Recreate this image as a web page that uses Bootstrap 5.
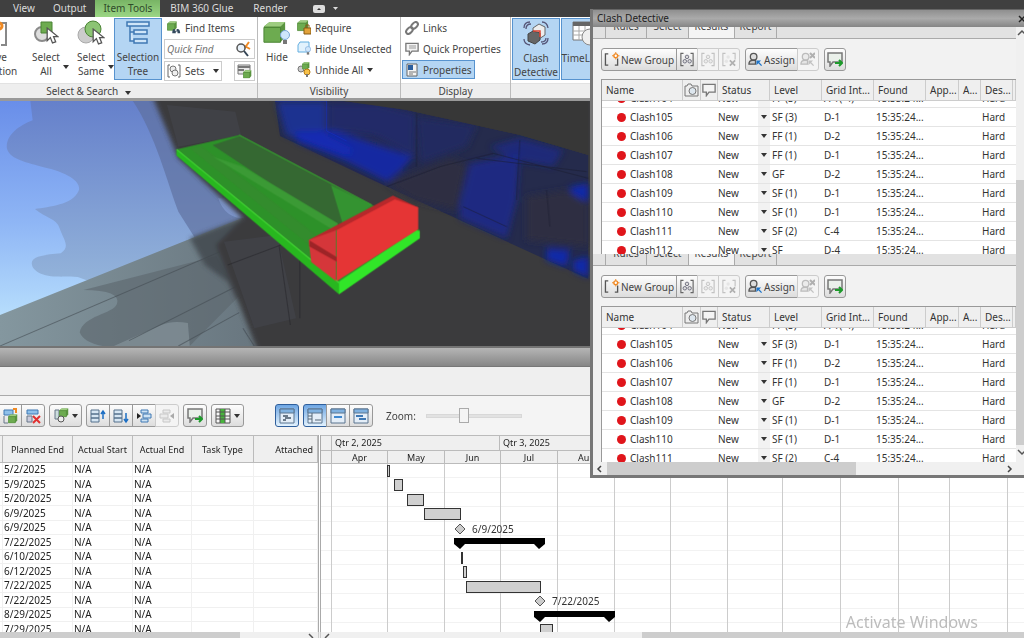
<!DOCTYPE html>
<html lang="en">
<head>
<meta charset="utf-8">
<meta name="viewport" content="width=device-width, initial-scale=1">
<title>Clash Detective and TimeLiner</title>
<link href="https://cdn.jsdelivr.net/npm/bootstrap@5.3.0/dist/css/bootstrap.min.css" rel="stylesheet">
<style>
body{font-family:"Noto Sans","Open Sans",sans-serif;font-size:10px;line-height:14px;color:#444;background:#f0f0f0;height:100vh}
svg{display:block;flex:none}
button,input{font:inherit;color:inherit}
.btn{--bs-btn-font-size:10px;--bs-btn-line-height:14px;--bs-btn-padding-x:0;--bs-btn-padding-y:0;--bs-btn-color:#444;--bs-btn-border-radius:0;--bs-btn-hover-color:#111;white-space:nowrap}
.menubar{background:#404040;height:17px;padding-left:4px}
.menubar .nav-link{color:#dcdcdc;padding:0 9px;line-height:17px}
.menubar .nav-link.active{background:#8fcb78;color:#2f4a2a;background-image:linear-gradient(#78b465,#9bd684);padding:0 8px}
.menubar .nav-link.active ~ .nav-link{padding:0 10px}
.ribbon{background:#fff;border-bottom:3px solid #999;height:84px}
.panel{display:flex;flex-direction:column;border-right:1px solid #bbb}
.panel-body{flex:1;display:flex;padding:1px 2px;align-items:flex-start}
.panel-foot{background:#eee;height:15px;text-align:center;line-height:15px;border-top:1px solid #e2e2e2}
.first-panel{width:258px;overflow:hidden}
.first-panel .panel-foot{padding-right:80px}
.visibility-panel{width:143px}
.display-panel{width:110px}
.tools-panel{flex:1;border:0;overflow:hidden}
.display-panel .panel-body,.tools-panel .panel-body{padding:1px;gap:1px}
.big{display:flex;flex:none;flex-direction:column;align-items:center;gap:4px;width:48px;height:62px;padding-top:1px;border:1px solid transparent}
.big.narrow{width:44px}
.big.on,.tool.on{background:#b4d5f3;border-color:#5793cf}
.tool{display:flex;align-items:center;gap:4px;height:19px;border:1px solid transparent;padding:0 2px}
.caret{width:0;height:0;border:3px solid transparent;border-top:4px solid #333;border-bottom:0;display:inline-block;flex:none}
.big-caret{margin:47px 0 0 -5px}
.stack{display:flex;flex-direction:column;gap:2px}
.find-stack{width:91px;margin-left:2px;flex:none}
.boxed{border:1px solid #ccc;background:#fff;height:20px}
.search-box input{border:0;outline:0;background:none;padding:0 2px;width:70px;font-style:italic;min-width:0}
.hide-btn{width:34px}
.scene{height:245px;background:#3a3a3b}
.dockbar{height:21px;background:linear-gradient(#b5b5b5,#868686);border-top:2px solid #747474;border-bottom:1px solid #777}
.dockgap{height:29px;border-bottom:1px solid #aaa;background:#efefef}
.strip{height:39px;background:#f4f4f4;gap:4px}
.ib{height:23px;border:1px solid #999;background:linear-gradient(#fdfdfd,#ddd);display:flex;align-items:center;justify-content:center;min-width:24px;gap:3px;padding:0 3px;border-radius:3px}
.btn-group>.ib{flex:none}
.strip .btn-group:first-child{margin-left:-2px}
.ib:disabled{opacity:1;border-color:#ccc;background:#f4f4f4}
.ib:disabled svg{opacity:.35;filter:grayscale(1)}
.ib.on{border-color:#2f5f9c;background:linear-gradient(#6ea6e3,#e3f2fd)}
.view-start{margin-left:27px}
.zoom-label{margin-left:9px;font-size:10px}
.zoomer{appearance:none;width:96px;height:16px;margin-left:6px;background:transparent}
.zoomer::-webkit-slider-runnable-track{height:4px;background:#e2e2e2;border:1px solid #d8d8d8}
.zoomer::-webkit-slider-thumb{appearance:none;width:10px;height:15px;margin-top:-7px;background:#f4f4f4;border:1px solid #aaa}
.tasks{width:319px;border-right:1px solid #aaa}
.tasks table,.clashes{table-layout:fixed;width:100%;border-collapse:separate;border-spacing:0}
.tasks th{height:28px;background:#efefef;font-size:9px;font-weight:400;border:solid #bbb;border-width:1px 1px 1px 0;text-align:center;padding:2px 0 0;color:#222;white-space:nowrap}
.tasks td{height:14px;line-height:13px;padding:0 1px;border:solid #f0f0f0;border-width:0 1px 1px 0;color:#222;white-space:nowrap}
.tasks tbody tr:nth-child(even) td{height:15px}
.schedule{border-left:1px solid #aaa;margin-left:1px}
.quarters,.months{display:flex;height:14px;background:#efefef;color:#222;border-top:1px solid #bbb;font-size:9px;line-height:13px}
.quarters{height:15px;line-height:14px}
.months{border-bottom:1px solid #bbb}
.quarters div,.months div{flex:none;border-right:1px solid #bbb}
.quarters div{padding-left:3px}
.months div{text-align:center}
.quarters .lead-in,.months .lead-in{width:11px}
.m56{width:56px}.m57{width:57px}.m58{width:58px}.q2{width:168px}.q3{width:172px}
.chart{width:100%;height:174px}
.chart text{font-size:10px;fill:#333}
.hbar{height:6px;background:#f0f0f0;overflow:hidden;border-color:#ccc}
.hthumb{background:#cdcdcd}
.task-thumb{width:240px}
.gantt-thumb{width:382px}
.dialog-win{top:9px;left:590px;right:0;background:#f2f2f2;border:solid #777;border-width:0 0 3px 3px;z-index:3;overflow:hidden;color:#333}
.dialog-title{height:18px;background:linear-gradient(#8f8f8f,#aaa 50%,#858585);border-top:1px solid #666;padding-left:4px;line-height:17px;color:#222}
.pane{height:227px;overflow:hidden}
.pane.lower{height:208px}
.tabline{height:12px;display:flex;align-items:flex-end;overflow:hidden;background:#e2e2e2;border-bottom:1px solid #aaa;padding-left:12px}
.tabline a{flex:none;color:#444;text-decoration:none;text-align:center;border-right:1px solid #aaa;padding-bottom:5px;line-height:14px;width:42px}
.tabline a.first{border-left:1px solid #aaa}
.tabline a.on{background:#f4f4f4;width:46px}
.tools{padding:9px 8px 8px}
.tools .ib{gap:1px;padding:0 2px}
.tools .btn-group{margin-right:5px}
.tools .grp{min-width:22px;padding:0}
.grid-box{margin-left:8px;border:solid #999;border-width:1px 0 0 1px;background:#fff}
.clashes th{height:21px;background:#efefef;font-weight:400;border:solid #ccc;border-width:0 1px 1px 0;padding:0 0 0 4px;white-space:nowrap;overflow:hidden}
.clashes th.ic{padding:0 0 0 1px}
.clashes td{height:19px;border-bottom:1px solid #e4e4e4;padding:0 0 0 2px;white-space:nowrap;overflow:hidden}
.clip{overflow:hidden}
.clip .clashes{margin-top:-12px}
.dot{width:9px;height:9px;border-radius:50%;background:#e0151b;margin:0 4px 0 13px}
.pick{width:12px;height:18px;border:0;background:#f2f2f2;padding:0;display:flex;align-items:center;justify-content:center}
.vbar{width:8px;background:#f0f0f0}
.vthumb{background:#cdcdcd;margin-top:142px;height:265px}
.hscroll{height:13px;background:#f0f0f0}
.hscroll .hthumb{width:249px;height:13px}
.watermark{right:46px;bottom:5px;font-size:16px;line-height:22px;color:#bcbcbc;z-index:2}
</style>
</head>
<body class="d-flex flex-column overflow-hidden">
<svg width="0" height="0" class="position-absolute" aria-hidden="true">
<defs>
<linearGradient id="sky" x1="0" y1="0" x2="0" y2="1"><stop offset="0" stop-color="#698ee9"/><stop offset=".5" stop-color="#8fb6f5"/><stop offset=".9" stop-color="#b9e0fd"/></linearGradient>
<linearGradient id="haze" x1="0" y1="0" x2="0" y2="1"><stop offset="0" stop-color="#6580cb"/><stop offset=".75" stop-color="#94b4da"/></linearGradient>
<linearGradient id="ground" x1="0" y1="0" x2="1" y2="0"><stop offset="0" stop-color="#84979f"/><stop offset="1" stop-color="#65727b"/></linearGradient>
<filter id="soft"><feGaussianBlur stdDeviation="7"/></filter>
<filter id="softer"><feGaussianBlur stdDeviation="9"/></filter>
<symbol id="cube" viewBox="0 0 26 26"><path d="M1 6 7 1h17v16l-5 6H1z" fill="#5a9440"/><path d="M1 6 7 1h17l-5 5z" fill="#9dcc80"/><path d="M1 7h18v16H1z" fill="#6dab50" stroke="#4a8334"/></symbol>
<symbol id="bulb" viewBox="0 0 10 16"><circle cx="5" cy="5" r="4.500" fill="#cfe6fb" stroke="#7ba7d6"/><path d="M3 10h4v4H3z" fill="#777"/></symbol>
<symbol id="cursor" viewBox="0 0 12 16"><path d="M1 1v12l3-3 2 5 3-1-2-5h4z" fill="#fff" stroke="#555" stroke-width="1.200"/></symbol>
<symbol id="note" viewBox="0 0 16 15"><path d="M1 1h14v9H8l-3 4v-4H1z" fill="#f4f4f4" stroke="#777" stroke-width="1.500"/></symbol>
<symbol id="noteadd" viewBox="0 0 16 15"><path d="M1 1h14v9H6l-3 4v-4H1z" fill="#eaf0ea" stroke="#777" stroke-width="1.500"/><path d="M8 11h7M12 8l3 3-3 3" stroke="#1d9a2b" stroke-width="2" fill="none"/></symbol>
<symbol id="camera" viewBox="0 0 15 14"><path d="M1 3h2l1-2h3l1 2h6v10H1z" fill="#eee" stroke="#777"/><circle cx="8.500" cy="8" r="3.500" fill="#dde6ee" stroke="#777"/></symbol>
<symbol id="group" viewBox="0 0 16 16"><path d="M4 1H1v14h3M12 1h3v14h-3" fill="none" stroke="#666" stroke-width="1.300"/><g fill="#ddd" stroke="#667"><circle cx="8" cy="5" r="2"/><circle cx="5.500" cy="10" r="2"/><circle cx="11" cy="10" r="2"/></g></symbol>
<symbol id="groupx" viewBox="0 0 16 16"><path d="M4 1H1v14h3M12 1h3v7" fill="none" stroke="#666" stroke-width="1.300"/><circle cx="7" cy="5" r="2" fill="#ccc"/><circle cx="5" cy="10" r="2" fill="#ccc"/><path d="m9 9 6 6m0-6-6 6" stroke="#333" stroke-width="2"/></symbol>
<symbol id="user" viewBox="0 0 16 16"><circle cx="6" cy="5" r="3.500" fill="#ddd" stroke="#555" stroke-width="1.400"/><path d="M1 13q0-4 4-4h3v4z" fill="#ccc" stroke="#555" stroke-width="1.400"/><path d="M9 9h5l-2 2 3 3-1 1-3-3-2 2z" fill="#1d74c9"/></symbol>
<symbol id="newgrp" viewBox="0 0 16 16"><path d="M4 2H1v12h3M11 14h3V7" fill="none" stroke="#555" stroke-width="1.400"/><circle cx="12" cy="4" r="2" fill="#fff" stroke="#f08a24" stroke-width="1.500"/><path d="M12 0v2M12 6v2M8 4h2M14 4h2" stroke="#f08a24"/></symbol>
<symbol id="rows" viewBox="0 0 16 16"><path d="M1 2h8v4H1zM1 6h8v4H1zM1 10h8v4H1z" fill="#d6e6f3" stroke="#54718c"/></symbol>
<symbol id="win" viewBox="0 0 16 16"><path d="M1 1h14v14H1z" fill="#e4eef8" stroke="#5a748f"/><path d="M1 1h14v4H1z" fill="#7fb1e0" stroke="#5a748f"/></symbol>
<symbol id="findcube" viewBox="0 0 16 16"><use href="#cube" width="12" height="12"/><path d="M6 14q0-5 2-5h1v2h2V9h1q3 0 3 5h-3v-2h-2v2z" fill="#34495e"/></symbol>
</defs>
</svg>

<nav class="menubar d-flex flex-shrink-0" aria-label="Ribbon tabs">
<a class="nav-link" href="#">View</a><a class="nav-link" href="#">Output</a><a class="nav-link active" href="#">Item Tools</a><a class="nav-link" href="#">BIM 360 Glue</a><a class="nav-link" href="#">Render</a>
<button class="btn d-flex align-items-center gap-2 ms-3 border-0" aria-label="Minimize ribbon"><svg width="12" height="8"><rect width="12" height="8" rx="2" fill="#ddd"/><path d="m4 5 2-2 2 2z" fill="#333"/></svg><svg width="5" height="4"><path d="M0 0h5L2.500 3z" fill="#ddd"/></svg></button>
</nav>

<header class="ribbon d-flex flex-shrink-0">
<section class="panel first-panel">
<div class="panel-body justify-content-end">
<button class="btn big me-1"><svg width="24" height="26"><path d="M17 3h5v22h-5" fill="none" stroke="#888" stroke-width="2"/><circle cx="15" cy="6" r="3" fill="#fff" stroke="#f08a24" stroke-width="3"/></svg><span>Save<br>Selection</span></button>
<button class="btn big narrow"><svg width="26" height="26"><circle cx="9" cy="14" r="7" fill="#ddd" stroke="#8b8b8b" stroke-width="2"/><path d="M8 2h11v11H8z" fill="#6dab50" stroke="#4a8334"/><use href="#cursor" x="13" y="7" width="13" height="17"/></svg><span>Select<br>All</span></button>
<span class="caret big-caret"></span>
<button class="btn big narrow"><svg width="28" height="26"><circle cx="9" cy="15" r="8" fill="#ccc" stroke="#aaa"/><circle cx="16" cy="9" r="8" fill="#8cc474" stroke="#4a8334"/><use href="#cursor" x="15" y="8" width="13" height="17"/></svg><span>Select<br>Same</span></button>
<span class="caret big-caret"></span>
<button class="btn big on"><svg width="26" height="26" fill="#cfe5f8" stroke="#3f78b4" stroke-width="1.500"><path d="M2 2h22v4H2zM9 10h13v4H9zM9 19h13v4H9zM5 6v15h4M5 12h4"/></svg><span>Selection<br>Tree</span></button>
<div class="stack find-stack">
<button class="btn tool"><svg width="14" height="14"><use href="#findcube" width="14" height="14"/></svg>Find Items</button>
<div class="search-box boxed d-flex align-items-center"><input type="text" placeholder="Quick Find" aria-label="Quick Find"><svg width="16" height="16"><path d="M14 1 9 8M8 4l7 4" stroke="#f08a24" stroke-width="2"/><circle cx="6" cy="7" r="4" fill="#e9f2fa" stroke="#555" stroke-width="1.500"/><path d="m9 10 4 5" stroke="#345" stroke-width="2"/></svg></div>
<div class="d-flex justify-content-between"><button class="btn tool boxed gap-1"><svg width="14" height="14"><path d="M3 1H1v12h2M11 1h2v12h-2" fill="none" stroke="#666"/><circle cx="6" cy="5" r="3" fill="#eee" stroke="#777"/><circle cx="8" cy="9" r="3" fill="#eee" stroke="#777"/></svg><span class="me-1">Sets</span><span class="caret"></span></button><button class="btn tool boxed" aria-label="Selection inspector"><svg width="15" height="15"><path d="M1 1h12v9H1z" fill="#e8e8e8" stroke="#777"/><path d="M1 3h12M1 6h6" stroke="#777" stroke-width="2"/><use href="#cube" x="6" y="6" width="9" height="9"/></svg></button></div>
</div></div>
<div class="panel-foot">Select &amp; Search <span class="caret ms-1"></span></div>
</section>
<section class="panel visibility-panel">
<div class="panel-body">
<button class="btn big hide-btn"><svg width="28" height="26"><use href="#cube" width="24" height="26"/><use href="#bulb" x="17" y="10" width="10" height="16"/></svg><span>Hide</span></button>
<div class="stack">
<button class="btn tool"><svg width="14" height="15"><use href="#cube" width="12" height="12"/><path d="M7 8h7v6H7z" fill="#e2a23a" stroke="#875b13"/><path d="M9 8V5h3v3" fill="none" stroke="#875b13"/></svg>Require</button>
<button class="btn tool"><svg width="14" height="15"><path d="M1 4 3 1h9v10H1z" fill="#e2f2fd" stroke="#62aee0"/><use href="#bulb" x="8" y="5" width="6" height="10"/></svg>Hide Unselected</button>
<button class="btn tool"><svg width="14" height="15"><circle cx="4" cy="7" r="3" fill="#ccc" stroke="#777"/><use href="#cube" x="5" width="8" height="8"/><circle cx="10" cy="10" r="3" fill="#f7c14a" stroke="#b77b12"/><path d="M9 12h2v3H9z" fill="#777"/></svg>Unhide All <span class="caret"></span></button>
</div></div>
<div class="panel-foot">Visibility</div>
</section>
<section class="panel display-panel">
<div class="panel-body"><div class="stack align-items-start">
<button class="btn tool"><svg width="14" height="14" fill="none" stroke="#777" stroke-width="2"><ellipse cx="4.500" cy="9.500" rx="4" ry="2.500" transform="rotate(-45 4.500 9.500)"/><ellipse cx="9.500" cy="4.500" rx="4" ry="2.500" transform="rotate(-45 9.500 4.500)"/></svg>Links</button>
<button class="btn tool"><svg width="14" height="14"><use href="#note" width="14" height="14"/><path d="M4 4h7M4 6h7" stroke="#999"/></svg>Quick Properties</button>
<button class="btn tool on"><svg width="14" height="14"><path d="M2 1h10v12H2z" fill="#f4f4f4" stroke="#666"/><path d="M3 2h5v5H3z" fill="#2b5f9f"/><path d="M4 9h7M4 11h4" stroke="#777"/></svg>Properties</button>
</div></div>
<div class="panel-foot">Display</div>
</section>
<section class="panel tools-panel">
<div class="panel-body">
<button class="btn big on"><svg width="28" height="27"><g fill="none" stroke="#557" stroke-width="1.300"><path d="M2 8q0-6 6-6M4 9q0-5 5-5M26 18q0 6-6 6M24 18q0 4-5 4M20 2q5 0 6 6M2 19q0 5 6 6"/></g><path d="m11 8 6-4 6 3v8l-6 4-6-3z" fill="#ededed" stroke="#666"/><path d="m6 14 5-3 7 2v7l-5 4-7-3z" fill="#666" stroke="#444"/><path d="M11 11h7v6" fill="none" stroke="#d43" stroke-width="1.500"/></svg><span>Clash<br>Detective</span></button>
<button class="btn big on"><svg width="28" height="27"><path d="M2 2h22v18H2z" fill="#fff" stroke="#777"/><path d="M2 2h22v4H2z" fill="#666"/><path d="M2 11h22M2 15h22M8 6v14M14 6v14" stroke="#aaa"/><circle cx="19" cy="17" r="8" fill="#eee" stroke="#888"/></svg><span>TimeLiner</span></button>
</div>
<div class="panel-foot"></div>
</section>
</header>

<main class="d-flex flex-column flex-grow-1 overflow-hidden">
<div class="scene flex-shrink-0">
<svg width="100%" height="100%" viewBox="0 18 2698 735" preserveAspectRatio="none" role="img" aria-label="Model view of the clashing elements">
<path d="M0 18h1000v735H0z" fill="url(#sky)"/>
<path d="M80 18 86 76C50 92 15 120 18 160 25 190 60 200 110 215 190 235 215 265 207 288 190 330 130 335 92 342 120 370 150 370 157 400 170 440 185 455 160 475 110 480 70 485 88 520 110 550 150 545 205 546L700 753V18z" fill="url(#haze)"/>
<path d="M350 18C410 120 440 260 470 350L520 440 800 640V18z" fill="#5e6f9d" opacity=".65"/>
<path d="M575 310q20 70 90 60l-20 -60z" fill="#8da7df" opacity=".5"/>
<path d="M0 660 640 368 760 753H0z" fill="url(#ground)"/>
<path d="M220 585q100 0 88 42c-10 30-90 35-98 85q10 30 60 41H500l130-150-60-120z" fill="#5c656d" opacity=".6"/>
<path d="M425 690q30-15 70-6l5 69H300z" fill="#84939a" opacity=".7"/>
<path d="M0 753 580 470M340 737 630 570M470 753l160-100M640 700l30 53" stroke="#454c54" stroke-width="3" opacity=".6" fill="none"/>
<g filter="url(#soft)"><path d="M500 430 640 368 720 700 690 753 600 560 540 510z" fill="#3e434b" opacity=".8"/><path d="M400 0H2698V800H690L570 450 640 370 470 190z" fill="#3a3a3c"/></g>
<path d="M440 30 620 50 635 120 470 155zM590 440l140-20 50 250-110 30z" fill="#555a70" opacity=".2"/>
<g transform="translate(527 15) scale(.878 1)">
<path d="M225 3 240 108 500 232 660 305 840 388 1165 537V165L960 105 620 30 430 3z" fill="#252b4c"/>
<g filter="url(#softer)">
<path d="M230 5h148v100l80 40-10 25-190-65z" fill="#1f3090"/>
<path d="M285 95 400 90 490 120 640 170 600 215 560 245 430 180 290 125z" fill="#1029bd" opacity=".75"/>
<path d="M385 10h150l110 30v130l-120-60-140-20z" fill="#232c68"/>
<path d="M650 50 830 75 800 140 660 190z" fill="#222b60"/>
<path d="M810 190 960 160 950 300 920 415 780 355 780 310z" fill="#172a98" opacity=".7"/>
<path d="M870 140 960 115 1090 150 1060 200 940 180z" fill="#1a2b8c" opacity=".7"/>
<path d="M1040 445 1110 450 1100 500 1040 480zM1120 480l45-10v62l-45-20zM1110 260l55-10v50l-45-5z" fill="#1128b4" opacity=".9"/>
<path d="M560 250 750 175 800 190 770 330 640 300zM980 290l120-20 65 40v130L980 420z" fill="#2d2f42"/>
</g>
<path d="M225 3h155v90l60 30" fill="none" stroke="#1433c8" stroke-width="3" opacity=".5"/>
<path d="M650 40v160M560 260 720 200 880 160 1165 235M830 175l330 40M960 120 950 300M790 320l130 60M1040 270l10 110" fill="none" stroke="#1c1f30" stroke-width="3" opacity=".5"/>
<path d="M430 3H1165V165L960 105 620 30z" fill="#373737"/>
</g>
<path d="M600 510 740 450M735 450l30 240M790 480v190" stroke="#1d1e24" stroke-width="3" opacity=".4" fill="none"/>
<path d="M465 163 630 120 1106 405v22L893 597 465 180z" fill="#2ba126" opacity=".85"/>
<path d="M560 150 632 123 980 330 885 395z" fill="#366634" opacity=".95"/>
<path d="M500 160 530 152 890 470v50z" fill="#338c2d"/><path d="M560 185 640 215 890 385 885 410z" fill="#3b9a35"/><path d="M872 270 980 330 905 395z" fill="#349331"/>
<path d="m630 120 350 210" stroke="#38a630" stroke-width="3"/>
<path d="M465 163 893 563V597L465 182z" fill="#28b71f"/><path d="m465 163 428 400" stroke="#48dd38" stroke-width="3"/>
<path d="M893 560 1096 405l10 3v22L893 598z" fill="#31e628"/>
<path d="m813 435 72-42v165l-65-57z" fill="#d5363a"/><path d="M813 435 1035 302 1102 337 1000 350 887 405z" fill="#b7282b"/><path d="M887 405 1040 313 1102 337V403L887 558z" fill="#e53535"/><path d="m815 436 72 50v14l-72-46z" fill="#9d2427"/>
</svg>
</div>
<div class="dockbar flex-shrink-0"></div>
<div class="dockgap flex-shrink-0"></div>
<div class="strip d-flex align-items-center flex-shrink-0">
<div class="btn-group"><button class="btn ib rounded-0 border-start-0" aria-label="Add task"><svg width="16" height="16"><path d="M2 2h9v5H2z" fill="#8fc1ea" stroke="#3f78b4"/><path d="M11 1h3v4" stroke="#f08a24" stroke-width="2" fill="none"/><use href="#cube" x="6" y="6" width="10" height="10"/><path d="M2 8v7h4" fill="none" stroke="#678"/></svg></button><button class="btn ib" aria-label="Delete task"><svg width="16" height="16"><path d="M2 2h11v4H2z" fill="#8fc1ea" stroke="#3f78b4"/><path d="M2 8h5v6H2z" fill="#ccd" stroke="#678"/><path d="m8 8 7 7m0-7-7 7" stroke="#e03030" stroke-width="2"/></svg></button></div>
<button class="btn ib" aria-label="Attach"><svg width="16" height="16"><path d="M2 2h4v9H2z" fill="#cdd" stroke="#678"/><use href="#cube" x="6" width="10" height="10"/><circle cx="8" cy="11" r="3" fill="#eee" stroke="#555"/></svg><span class="caret"></span></button>
<div class="btn-group"><button class="btn ib" aria-label="Move up"><svg width="16" height="16"><use href="#rows" width="16" height="16"/><path d="M13 11V3M11 6l2-3 2 3" stroke="#1d6fc4" stroke-width="1.500" fill="none"/></svg></button><button class="btn ib" aria-label="Move down"><svg width="16" height="16"><use href="#rows" width="16" height="16"/><path d="M13 5v9m-2-3 2 3 2-3" stroke="#1d6fc4" stroke-width="1.500" fill="none"/></svg></button><button class="btn ib" aria-label="Indent"><svg width="16" height="16"><path d="M5 2h7v3H5zM7 6h8v4H7zM5 11h7v3H5z" fill="#cfe3f4" stroke="#3f78b4"/><path d="M1 5v6l4-3z" fill="#222"/></svg></button><button class="btn ib" disabled aria-label="Outdent"><svg width="16" height="16"><path d="M4 2h7v3H4zM1 6h8v4H1zM4 11h7v3H4z" fill="#ddd" stroke="#777"/><path d="M15 5v6l-4-3z" fill="#222"/></svg></button></div>
<button class="btn ib" aria-label="Add comment"><svg width="16" height="15"><use href="#noteadd"/></svg></button>
<button class="btn ib" aria-label="Columns"><svg width="16" height="16"><path d="M1 1h14v14H1z" fill="#f7f7f7" stroke="#555"/><path d="M5 1h5v14H5z" fill="#47b53c"/><path d="M1 4h14M1 8h14M1 11h14M5 1v14M10 1v14" stroke="#555"/></svg><span class="caret"></span></button>
<button class="btn ib on view-start" aria-label="Show gantt"><svg width="16" height="16"><use href="#win"/><path d="M4 8h5M6 10h6M4 12h3" stroke="#456" stroke-width="1.500"/></svg></button>
<div class="btn-group"><button class="btn ib on" aria-label="Planned dates"><svg width="16" height="16"><use href="#win"/><path d="M5 5v10M1 8h4M1 11h4M8 12h6" stroke="#567"/></svg></button><button class="btn ib" aria-label="Actual dates"><svg width="16" height="16"><use href="#win"/><path d="M4 9h8" stroke="#3f88cf" stroke-width="2"/></svg></button><button class="btn ib" aria-label="Planned and actual dates"><svg width="16" height="16"><use href="#win"/><path d="M3 8h7M6 11h7" stroke="#3f78b4" stroke-width="2"/></svg></button></div>
<label class="zoom-label" for="zoom">Zoom:</label><input class="zoomer" id="zoom" type="range" value="38">
</div>

<div class="d-flex flex-grow-1 overflow-hidden bg-white">
<div class="tasks flex-shrink-0">
<table><colgroup><col style="width:3px"><col style="width:70px"><col style="width:60px"><col style="width:59px"><col style="width:62px"><col></colgroup>
<thead><tr><th></th><th scope="col">Planned End</th><th scope="col">Actual Start</th><th scope="col">Actual End</th><th scope="col">Task Type</th><th scope="col" class="text-end pe-1">Attached</th></tr></thead><tbody id="taskRows"></tbody></table>
</div>
<div class="schedule flex-grow-1 overflow-hidden">
<div class="quarters"><div class="lead-in"></div><div class="q2">Qtr 2, 2025</div><div class="q3">Qtr 3, 2025</div></div>
<div class="months"><div class="lead-in"></div><div class="m56">Apr</div><div class="m57">May</div><div class="m56">Jun</div><div class="m57">Jul</div><div class="m58">Aug</div></div>
<svg class="chart" id="chart" role="img" aria-label="Gantt chart"></svg>
</div>
</div>
<div class="d-flex flex-shrink-0">
<div class="tasks hbar flex-shrink-0 d-flex justify-content-between"><div class="hthumb task-thumb"></div><svg width="12" height="6"><path d="m3 2 4 4" stroke="#555" stroke-width="1.500"/></svg></div>
<div class="schedule hbar flex-grow-1 d-flex justify-content-between"><svg width="12" height="6"><path d="M8 2 4 6" stroke="#555" stroke-width="1.500"/></svg><div class="hthumb gantt-thumb"></div></div>
</div>
</main>

<section class="dialog-win position-absolute" aria-label="Clash Detective">
<div class="dialog-title d-flex justify-content-between">Clash Detective<button class="btn border-0" aria-label="Close"><svg width="6" height="8"><path d="m1 1 6 6M7 1 1 7" stroke="#222" stroke-width="1.500"/></svg></button></div>
<div class="d-flex">
<div class="flex-grow-1 overflow-hidden" id="panes"></div>
<div class="vbar flex-shrink-0"><svg width="8" height="11"><path d="m2 8 4-4 4 4" fill="none" stroke="#555" stroke-width="1.500"/></svg><div class="vthumb"></div><svg width="8" height="14"><path d="m2 5 4 4 4-4" fill="none" stroke="#555" stroke-width="1.500"/></svg></div>
</div>
<div class="hscroll d-flex align-items-center"><svg width="14" height="13"><path d="M8 4 5 7l3 3" fill="none" stroke="#444" stroke-width="1.500"/></svg><div class="hthumb"></div><svg class="ms-auto me-2" width="12" height="13"><path d="m4 4 3 3-3 3" fill="none" stroke="#444" stroke-width="1.500"/></svg></div>
</section>
<div class="watermark position-absolute">Activate Windows</div>

<template id="paneTpl"><div class="pane">
<nav class="tabline"><a class="first" href="#">Rules</a><a href="#">Select</a><a class="on" href="#">Results</a><a href="#">Report</a></nav>
<div class="tools d-flex">
<div class="btn-group"><button class="btn ib"><svg width="16" height="15"><use href="#newgrp"/></svg>New Group</button><button class="btn ib grp" aria-label="Group"><svg width="14" height="15"><use href="#group"/></svg></button><button class="btn ib grp" disabled aria-label="Remove from group"><svg width="14" height="15"><use href="#group"/></svg></button><button class="btn ib grp" disabled aria-label="Explode group"><svg width="14" height="15"><use href="#groupx"/></svg></button></div>
<div class="btn-group"><button class="btn ib"><svg width="15" height="15"><use href="#user"/></svg>Assign</button><button class="btn ib grp" disabled aria-label="Unassign"><svg width="15" height="15"><use href="#user"/><path d="m10 1 5 5m0-5-5 5" stroke="#333" stroke-width="2"/></svg></button></div>
<button class="btn ib grp" aria-label="Add comment"><svg width="16" height="15"><use href="#noteadd"/></svg></button>
</div>
<div class="grid-box">
<table class="clashes"><colgroup><col style="width:81px"><col style="width:18px"><col style="width:17px"><col style="width:52px"><col style="width:52px"><col style="width:52px"><col style="width:52px"><col style="width:33px"><col style="width:22px"><col style="width:32px"><col></colgroup>
<thead><tr><th scope="col">Name</th><th class="ic" scope="col" aria-label="Viewpoint"><svg width="15" height="14"><use href="#camera"/></svg></th><th class="ic" scope="col" aria-label="Comments"><svg width="14" height="14"><use href="#note"/></svg></th><th scope="col">Status</th><th scope="col">Level</th><th scope="col">Grid Int...</th><th scope="col">Found</th><th scope="col">App...</th><th scope="col">A...</th><th scope="col">Des...</th><th></th></tr></thead></table>
<div class="clip"><table class="clashes"><colgroup><col style="width:114px"><col style="width:42px"><col style="width:12px"><col style="width:52px"><col style="width:52px"><col style="width:106px"><col></colgroup><tbody></tbody></table></div>
</div></div></template>

<script>
const clashes=[["104","FF (3)","A-1(-4)"],["105","SF (3)","D-1"],["106","FF (1)","D-2"],["107","FF (1)","D-1"],["108","GF","D-2"],["109","SF (1)","D-1"],["110","SF (1)","D-1"],["111","SF (2)","C-4"],["112","SF","D-4"]];
for(const lower of [false,true]){
  const n=document.getElementById("paneTpl").content.cloneNode(true);
  if(lower)n.firstElementChild.classList.add("lower");
  n.querySelector("tbody").innerHTML=clashes.slice(0,lower?8:9).map(([id,l,g])=>`<tr><td><div class="d-flex align-items-center"><span class="dot"></span>Clash${id}</div></td><td>New</td><td class="p-0"><button class="pick" aria-label="Status of Clash${id}"><span class="caret"></span></button></td><td>${l}</td><td>${g}</td><td>15:35:24...</td><td>Hard</td></tr>`).join("");
  document.getElementById("panes").append(n);
}
const ends=["5/2/2025","5/9/2025","5/20/2025","6/9/2025","6/9/2025","7/22/2025","6/10/2025","6/12/2025","7/22/2025","7/22/2025","8/29/2025","7/29/2025"];
document.getElementById("taskRows").innerHTML=ends.map(d=>`<tr><td></td><td>${d}</td><td>N/A</td><td>N/A</td><td></td><td></td></tr>`).join("");

// Chart rows follow the task table: heights alternate 14 and 15 pixels.
const top_=i=>Math.floor(i*14.5);
let s="";
for(let i=1;i<13;i++)s+=`<path d="M0 ${top_(i)-.5}H2000" stroke="#f2f2f2"/>`;
for(const x of [10,66,123,179,236,293,349,406,461,519,577,628,686])s+=`<path d="M${x+.5} 0V200" stroke="#ccc"/>`;
for(const [i,x,w] of [[0,66,2],[1,73,8],[2,86,16],[3,103,36],[6,140,1],[7,142,3],[8,145,74],[11,219,12]])s+=`<rect x="${x+.5}" y="${top_(i)+1.5}" width="${w}" height="11" fill="#d0d0d0" stroke="#333"/>`;
for(const [i,x,t] of [[4,139,"6/9/2025"],[9,219,"7/22/2025"]]){const y=top_(i)+7;s+=`<path d="M${x} ${y-5}l5 5-5 5-5-5z" fill="#ccc" stroke="#555"/><text x="${x+12}" y="${y+4}">${t}</text>`}
for(const [i,a,b] of [[5,133,224],[10,213,294]]){const y=top_(i)+2;s+=`<path d="M${a} ${y}H${b}V${y+6}L${b-6} ${y+11} ${b-11} ${y+6}H${a+11}L${a+6} ${y+11} ${a} ${y+6}z"/>`}
document.getElementById("chart").innerHTML=s;
</script>
<script src="https://cdn.jsdelivr.net/npm/bootstrap@5.3.0/dist/js/bootstrap.bundle.min.js"></script>
</body>
</html>
